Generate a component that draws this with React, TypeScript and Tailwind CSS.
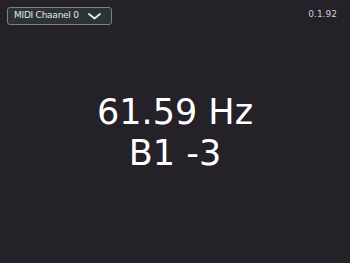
export default function App() {
  return (
    <div
      className="flex h-[263px] w-[350px] flex-col bg-[#242128] text-white"
      style={{ fontFamily: '"DejaVu Sans", Verdana, sans-serif' }}
    >
      <div className="flex items-start justify-between pl-[7px] pr-[13px] pt-[7px]">
        <button className="flex h-[18px] w-[105px] items-center justify-between rounded-[3px] border border-[#7c8388] bg-[#2c3236] pl-[6px] pr-[10px] text-[9px] tracking-[-0.25px] text-[#e4e6e8]">
          <span>MIDI Chaanel 0</span>
          <svg width="13" height="7" viewBox="0 0 13 7" fill="none">
            <path d="M1 1l5.5 4.5L12 1" stroke="#e8eaec" strokeWidth="1.8" strokeLinecap="round" strokeLinejoin="round" />
          </svg>
        </button>
        <span className="pt-[1px] text-[9px] text-[#d0d0d4]">0.1.92</span>
      </div>
      <div className="mt-[67px] flex flex-col items-center text-[35px] leading-[41px]">
        <span>61.59 Hz</span>
        <span>B1 -3</span>
      </div>
    </div>
  );
}
